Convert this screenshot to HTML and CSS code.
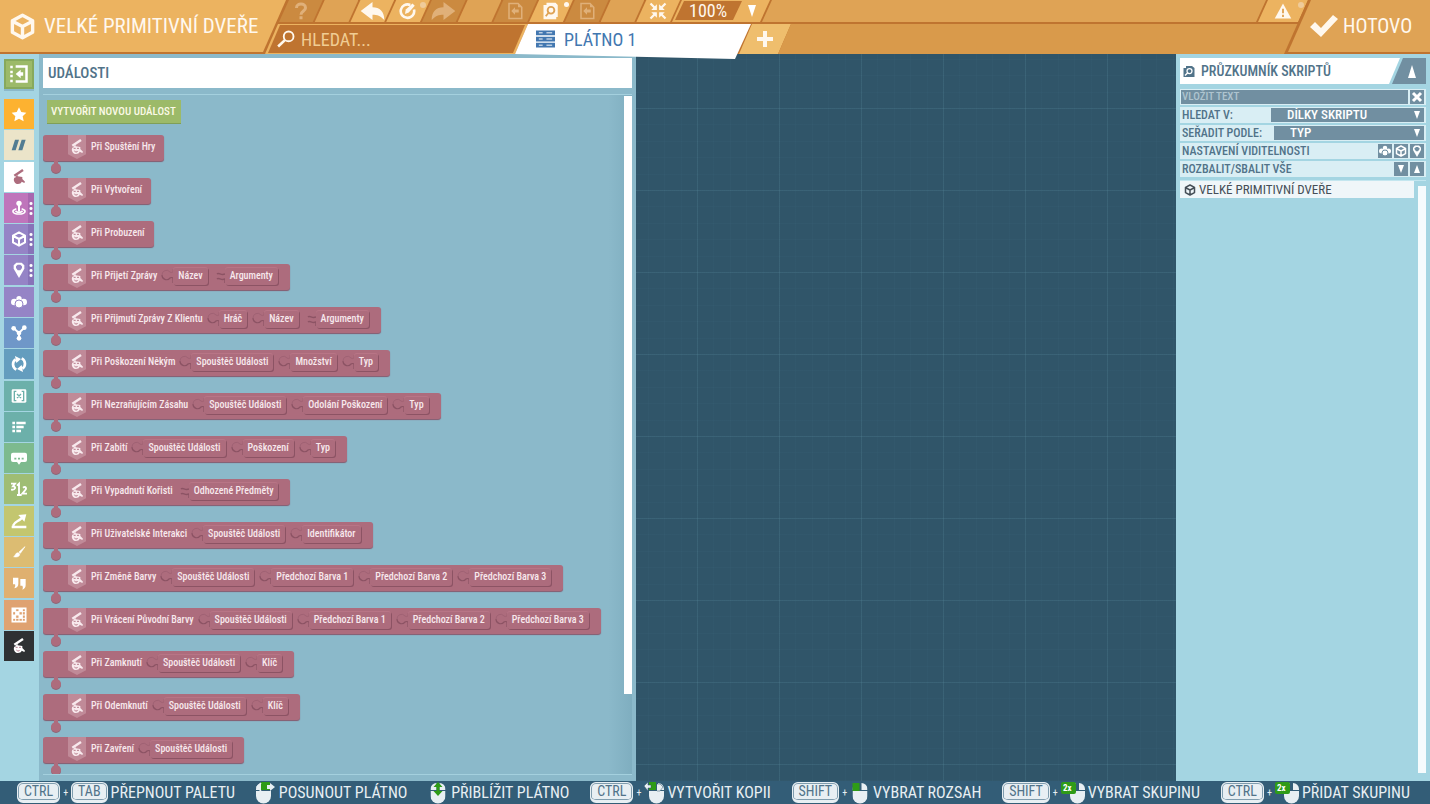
FILE: index.html
```html
<!DOCTYPE html>
<html lang="cs">
<head>
    <meta charset="UTF-8">
    <meta name="viewport" content="width=device-width, initial-scale=1.0">
    <title>Velké primitivní dveře</title>
    <link rel="stylesheet" href="styles.css">
</head>
<body>
    <!-- Shared icon shapes -->
    <svg class="sprite" width="0" height="0" aria-hidden="true">
        <symbol id="i-cube" viewBox="0 0 24 24"><path d="M12 2 21 6.8V17.2L12 22 3 17.2V6.8ZM3.5 7.5 12 12 20.500 7.500M12 12V21.500" fill="none" stroke="currentColor" stroke-width="3" stroke-linejoin="round"/></symbol>
        <symbol id="i-event" viewBox="0 0 18 24"><path d="M1 8.500 14 0l2 3L3 11.500Z"/><path d="M4 11l3-2 0 2 7 1v3l4 4-1 2-4-2c-1 4-9 5-11 0-1-2-1-4 0-6l3-1Z"/><path d="M4 14h3M9 14h3M5 18c2 2 4 2 5 0" stroke="#ad6c7d" stroke-width="1.300" fill="none"/></symbol>
        <symbol id="i-plug" viewBox="0 0 12 14"><path d="M1 6a4.500 4.500 0 0 0 8 3q1-1 3 0V14" fill="none" stroke="#8c5364" stroke-width="1.200"/><path d="M1 6a4.500 4.500 0 0 1 8-3q1 1 3 0V0" fill="none" stroke="#a06274"/></symbol>
        <symbol id="i-plug2" viewBox="0 0 12 14"><path d="M4 5c2-2 4 2 8 0M4 10c2-2 4 2 8 0V14" fill="none" stroke="#8c5364" stroke-width="1.400"/></symbol>
        <symbol id="i-doc" viewBox="0 0 24 24"><path d="M4 2h12l5 5v15H4Z" fill="none" stroke="currentColor" stroke-width="2"/><path d="M7 12l5-5v3h5v4h-5v3ZM16 2v5h5"/></symbol>
        <symbol id="i-mouse" viewBox="0 0 15 22"><path d="M0 9h15v5a7.500 7.500 0 0 1-15 0Z"/><path d="M0 8V7a6 6 0 0 1 6-6v7ZM9 8V1a6 6 0 0 1 6 6v1Z"/></symbol>
    </svg>

    <header class="topbar">
        <div class="object-name">
            <svg class="icon-cube"><use href="#i-cube"/></svg>
            <h1>VELKÉ PRIMITIVNÍ DVEŘE</h1>
        </div>
        <div class="middle">
            <div class="toolbar">
                <div class="tools">
                    <button class="tool off" aria-label="Nápověda"><svg viewBox="0 0 24 24"><path d="M6 8C6 1 18 1 18 8c0 4-6 4-6 9M12 19v4" fill="none" stroke="currentColor" stroke-width="4"/></svg></button>
                    <span class="tool empty"></span>
                    <button class="tool on" aria-label="Zpět"><svg class="wide" viewBox="0 0 26 22"><path d="M0 11 13 1V7C21 7 26 12 26 21 22 16 18 15 13 15v6Z"/></svg></button>
                    <button class="tool on dot faded" aria-label="Zaměřit"><svg viewBox="0 0 24 24"><path d="M15 4A9 9 0 1 0 20 10" fill="none" stroke="currentColor" stroke-width="3.500"/><path d="M8 16 9 10 18 2l3 3-8 9Z"/></svg></button>
                    <button class="tool off" aria-label="Znovu"><svg class="wide" viewBox="0 0 26 22"><path d="M26 11 13 1V7C5 7 0 12 0 21 4 16 8 15 13 15v6Z"/></svg></button>
                    <span class="tool empty"></span>
                    <button class="tool off" aria-label="Vložit"><svg><use href="#i-doc"/></svg></button>
                    <button class="tool on dot" aria-label="Průzkumník"><svg viewBox="0 0 24 24"><path d="M6 1h12l3 3v16h-2v3H2V4h4Z"/><circle cx="12" cy="11" r="4.500" fill="none" stroke="#dfa355" stroke-width="2.500"/><path d="M9 14l-4 5" stroke="#dfa355" stroke-width="2.500"/></svg></button>
                    <button class="tool off" aria-label="Vyjmout"><svg><use href="#i-doc"/></svg></button>
                    <span class="tool empty"></span>
                    <button class="tool on" aria-label="Vycentrovat"><svg viewBox="0 0 24 24"><path d="M2 2l7 7M22 2l-7 7M2 22l7-7M22 22l-7-7" stroke="currentColor" stroke-width="3"/><path d="M10.500 3v7.500H3ZM13.500 3v7.500H21ZM10.500 21v-7.500H3ZM13.500 21v-7.500H21Z"/></svg></button>
                </div>
                <label class="zoom">
                    <select aria-label="Přiblížení"><option>100%</option></select>
                    <span class="arrow-down"></span>
                </label>
                <span class="tool rest"></span>
                <button class="tool on alert dot faded" aria-label="Varování"><svg viewBox="0 0 24 24"><path d="M12 2 23 22H1Z"/><path d="M12 9v6M12 17v3" stroke="#dfa355" stroke-width="2.500"/></svg></button>
            </div>
            <div class="tabs">
                <label class="search">
                    <svg viewBox="0 0 24 24"><circle cx="15.500" cy="8.500" r="6.500" fill="none" stroke="currentColor" stroke-width="2.500"/><path d="M10.500 13.500 1.500 22" stroke="currentColor" stroke-width="3.500"/></svg>
                    <input type="text" placeholder="HLEDAT..." aria-label="Hledat">
                </label>
                <button class="tab">
                    <svg viewBox="0 0 20 18"><path d="M0 0h20v5H0ZM0 6.500h20v5H0ZM0 13h20v5H0Z"/><path d="M3 2.500h4M11 2.500h6M3 9h4M11 9h6M3 15.500h4M11 15.500h6" stroke="#fff"/></svg>
                    PLÁTNO 1
                </button>
                <button class="add-tab" aria-label="Přidat plátno"><svg viewBox="0 0 16 16"><path d="M8 0v16M0 8h16" stroke="currentColor" stroke-width="4"/></svg></button>
                <span class="tabs-rest"></span>
            </div>
        </div>
        <button class="done">
            <svg viewBox="0 0 28 22"><path d="M0 12 5 7l6 6L23 0l5 4L11 22Z"/></svg>
            HOTOVO
        </button>
    </header>

    <main class="workspace">
        <nav class="palette">
            <button class="cat toggle" aria-label="Skrýt paletu"><svg viewBox="0 0 24 24"><path d="M8 3h13v18H8M3 2v3M3 8v3M3 13v3M3 19v3" fill="none" stroke="currentColor" stroke-width="3"/><path d="M8 12l6-5v3h3v4h-3v3Z"/></svg></button>
            <div class="cats">
                <button class="cat star" aria-label="Oblíbené"><svg viewBox="0 0 24 24"><path d="M12 2l3.400 7 7.600 1-5.500 5.300L19 23l-7-3.700L5 23l1.500-7.700L1 10l7.600-1Z"/></svg></button>
                <button class="cat comment" aria-label="Komentáře"><svg viewBox="0 0 24 24"><path d="M6 4h6L7 20H1ZM16 4h6l-5 16h-6Z"/></svg></button>
                <button class="cat events" aria-label="Události"><svg><use href="#i-event"/></svg></button>
                <button class="cat player more" aria-label="Ovládání"><svg viewBox="0 0 24 24"><circle cx="12" cy="5" r="4"/><path d="M12 5v12" stroke="currentColor" stroke-width="3"/><path d="M8 13c-9 3-5 8 4 8s13-5 4-8M7 16c1 3 9 3 10 0" fill="none" stroke="currentColor" stroke-width="2.500"/></svg></button>
                <button class="cat object more" aria-label="Objekty"><svg><use href="#i-cube"/></svg></button>
                <button class="cat object more" aria-label="Místa"><svg viewBox="0 0 24 24"><path d="M8 1h8l4 4v5l-8 14-8-14V5Z"/><path d="M10 4h4l2.500 2.500V9L14 12.500h-4L7.500 9V6.500Z" fill="#9584c6"/></svg></button>
                <button class="cat object" aria-label="Skupiny"><svg viewBox="0 0 24 24"><circle cx="12" cy="7" r="4"/><circle cx="5" cy="12" r="5"/><circle cx="19" cy="12" r="5"/><circle cx="12" cy="15" r="6" stroke="#9584c6" stroke-width="1.500"/></svg></button>
                <button class="cat logic" aria-label="Logika"><svg viewBox="0 0 24 24"><path d="M4 5l8 7 8-8M12 12v8" stroke="currentColor" stroke-width="3" fill="none"/><circle cx="4" cy="5" r="3.500"/><circle cx="20" cy="4" r="3.500"/><circle cx="12" cy="12" r="3.500"/><circle cx="12" cy="20" r="3.500"/></svg></button>
                <button class="cat loop" aria-label="Cykly"><svg viewBox="0 0 24 24"><path d="M8 20.500A9 9 0 0 1 7 5M16 3.500A9 9 0 0 1 17 19" fill="none" stroke="currentColor" stroke-width="4"/><path d="M6 0l9 4.500-7 6ZM18 24l-9-4.500 7-6Z"/></svg></button>
                <button class="cat vars" aria-label="Proměnné"><svg viewBox="0 0 24 24"><rect x="1" y="2" width="22" height="20" rx="2"/><path d="M8 5H5v14h3M16 5h3v14h-3M9 9l6 6M15 9l-6 6" fill="none" stroke="#6cb0aa" stroke-width="2"/></svg></button>
                <button class="cat vars" aria-label="Seznamy"><svg viewBox="0 0 24 24"><path d="M2 6h4M2 12h4M2 18h4M8 6h14M8 12h11M8 18h7" stroke="currentColor" stroke-width="4"/></svg></button>
                <button class="cat chat" aria-label="Zprávy"><svg viewBox="0 0 24 24"><path d="M3 4h18q3 0 3 3v8q0 3-3 3h-6l-3 4-3-4H3q-3 0-3-3V7q0-3 3-3Z"/><path d="M5 13h3M10.500 13h3M16 13h3" stroke="#7dba8e" stroke-width="2.500"/></svg></button>
                <button class="cat numbers" aria-label="Čísla"><svg viewBox="0 0 24 24"><path d="M0 4h6L3 8c5 0 4 6-3 5M9 7l3-3v17M9 21h7M18 10c4-3 6 1 3 4l-4 5h7" fill="none" stroke="currentColor" stroke-width="2.800"/></svg></button>
                <button class="cat vector" aria-label="Vektory"><svg viewBox="0 0 24 24"><path d="M1 21h22M3 19c3-7 7-5 14-12" fill="none" stroke="currentColor" stroke-width="3.500"/><path d="M11 3l12-1-3 11Z"/></svg></button>
                <button class="cat brush" aria-label="Barvy"><svg viewBox="0 0 24 24"><path d="M21 4 12 12l2 2ZM11 13c-5 0-4 5-7 6 5 1 9 0 9-4Z" stroke="currentColor"/></svg></button>
                <button class="cat strings" aria-label="Texty"><svg viewBox="0 0 24 24"><path d="M3 4h8v9c0 4-2 6-6 7 1-2 2-4 1-6H3ZM14 6h8v9c0 4-2 6-5 7 1-3 1-4 0-6h-3Z"/></svg></button>
                <button class="cat assets" aria-label="Materiály"><svg viewBox="0 0 24 24"><path d="M2 2h20v20H2Z" fill="none" stroke="currentColor" stroke-width="2.500"/><path d="M2 7h20M2 12h20M2 17h20M7 2v20M12 2v20M17 2v20" stroke="currentColor" stroke-width="1.500"/><path d="M2 2h5v5H2ZM12 2h5v5h-5ZM7 7h5v5H7ZM2 12h5v5H2ZM12 12h5v5h-5Z"/></svg></button>
                <button class="cat custom" aria-label="Vlastní události"><svg><use href="#i-event"/></svg></button>
            </div>
        </nav>

        <section class="panel">
            <h2>UDÁLOSTI</h2>
            <div class="list">
                <button class="new-event">VYTVOŘIT NOVOU UDÁLOST</button>
                <ul class="blocks">
                    <li class="block"><svg class="badge"><use href="#i-event"/></svg><span>Při Spuštění Hry</span></li>
                    <li class="block"><svg class="badge"><use href="#i-event"/></svg><span>Při Vytvoření</span></li>
                    <li class="block"><svg class="badge"><use href="#i-event"/></svg><span>Při Probuzení</span></li>
                    <li class="block args"><svg class="badge"><use href="#i-event"/></svg><span>Při Přijetí Zprávy</span><svg class="plug"><use href="#i-plug"/></svg><span class="slot">Název</span><svg class="plug double"><use href="#i-plug2"/></svg><span class="slot">Argumenty</span></li>
                    <li class="block args"><svg class="badge"><use href="#i-event"/></svg><span>Při Přijmutí Zprávy Z Klientu</span><svg class="plug"><use href="#i-plug"/></svg><span class="slot">Hráč</span><svg class="plug"><use href="#i-plug"/></svg><span class="slot">Název</span><svg class="plug double"><use href="#i-plug2"/></svg><span class="slot">Argumenty</span></li>
                    <li class="block args"><svg class="badge"><use href="#i-event"/></svg><span>Při Poškození Někým</span><svg class="plug"><use href="#i-plug"/></svg><span class="slot">Spouštěč Události</span><svg class="plug"><use href="#i-plug"/></svg><span class="slot">Množství</span><svg class="plug"><use href="#i-plug"/></svg><span class="slot">Typ</span></li>
                    <li class="block args"><svg class="badge"><use href="#i-event"/></svg><span>Při Nezraňujícím Zásahu</span><svg class="plug"><use href="#i-plug"/></svg><span class="slot">Spouštěč Události</span><svg class="plug"><use href="#i-plug"/></svg><span class="slot">Odolání Poškození</span><svg class="plug"><use href="#i-plug"/></svg><span class="slot">Typ</span></li>
                    <li class="block args"><svg class="badge"><use href="#i-event"/></svg><span>Při Zabití</span><svg class="plug"><use href="#i-plug"/></svg><span class="slot">Spouštěč Události</span><svg class="plug"><use href="#i-plug"/></svg><span class="slot">Poškození</span><svg class="plug"><use href="#i-plug"/></svg><span class="slot">Typ</span></li>
                    <li class="block args"><svg class="badge"><use href="#i-event"/></svg><span>Při Vypadnutí Kořisti</span><svg class="plug"><use href="#i-plug2"/></svg><span class="slot">Odhozené Předměty</span></li>
                    <li class="block args"><svg class="badge"><use href="#i-event"/></svg><span>Při Uživatelské Interakci</span><svg class="plug"><use href="#i-plug"/></svg><span class="slot">Spouštěč Události</span><svg class="plug"><use href="#i-plug"/></svg><span class="slot">Identifikátor</span></li>
                    <li class="block args"><svg class="badge"><use href="#i-event"/></svg><span>Při Změně Barvy</span><svg class="plug"><use href="#i-plug"/></svg><span class="slot">Spouštěč Události</span><svg class="plug"><use href="#i-plug"/></svg><span class="slot">Předchozí Barva 1</span><svg class="plug"><use href="#i-plug"/></svg><span class="slot">Předchozí Barva 2</span><svg class="plug"><use href="#i-plug"/></svg><span class="slot">Předchozí Barva 3</span></li>
                    <li class="block args"><svg class="badge"><use href="#i-event"/></svg><span>Při Vrácení Původní Barvy</span><svg class="plug"><use href="#i-plug"/></svg><span class="slot">Spouštěč Události</span><svg class="plug"><use href="#i-plug"/></svg><span class="slot">Předchozí Barva 1</span><svg class="plug"><use href="#i-plug"/></svg><span class="slot">Předchozí Barva 2</span><svg class="plug"><use href="#i-plug"/></svg><span class="slot">Předchozí Barva 3</span></li>
                    <li class="block args"><svg class="badge"><use href="#i-event"/></svg><span>Při Zamknutí</span><svg class="plug"><use href="#i-plug"/></svg><span class="slot">Spouštěč Události</span><svg class="plug"><use href="#i-plug"/></svg><span class="slot">Klíč</span></li>
                    <li class="block args"><svg class="badge"><use href="#i-event"/></svg><span>Při Odemknutí</span><svg class="plug"><use href="#i-plug"/></svg><span class="slot">Spouštěč Události</span><svg class="plug"><use href="#i-plug"/></svg><span class="slot">Klíč</span></li>
                    <li class="block args"><svg class="badge"><use href="#i-event"/></svg><span>Při Zavření</span><svg class="plug"><use href="#i-plug"/></svg><span class="slot">Spouštěč Události</span></li>
                </ul>
                <div class="scrollbar"></div>
            </div>
        </section>

        <section class="canvas"></section>

        <aside class="explorer">
            <div class="explorer-head">
                <h2><svg viewBox="0 0 24 24"><path d="M6 1h12l5 4v18H1V5h5Z"/><circle cx="13" cy="11" r="5" fill="none" stroke="#fff" stroke-width="2.500"/><path d="M10 14l-6 6" stroke="#fff" stroke-width="3"/></svg>PRŮZKUMNÍK SKRIPTŮ</h2>
                <button class="collapse" aria-label="Sbalit"><span class="arrow-up"></span></button>
            </div>
            <div class="row filter">
                <input type="text" placeholder="VLOŽIT TEXT" aria-label="Vložit text">
                <button class="mini" aria-label="Smazat"><svg viewBox="0 0 12 12"><path d="M2 2l8 8M10 2l-8 8" stroke="currentColor" stroke-width="3"/></svg></button>
            </div>
            <div class="row">
                <label for="searchIn">HLEDAT V:</label>
                <span class="pick"><select id="searchIn"><option>DÍLKY SKRIPTU</option></select><span class="arrow-down"></span></span>
            </div>
            <div class="row">
                <label for="sortBy">SEŘADIT PODLE:</label>
                <span class="pick sort"><select id="sortBy"><option>TYP</option></select><span class="arrow-down"></span></span>
            </div>
            <div class="row">
                <span class="row-text">NASTAVENÍ VIDITELNOSTI</span>
                <button class="mini" aria-label="Skupiny"><svg viewBox="0 0 24 24"><circle cx="12" cy="6" r="4.500"/><circle cx="5" cy="12" r="5"/><circle cx="19" cy="12" r="5"/><circle cx="12" cy="16" r="6" stroke="#718fa1" stroke-width="2"/></svg></button>
                <button class="mini" aria-label="Objekty"><svg><use href="#i-cube"/></svg></button>
                <button class="mini" aria-label="Místa"><svg viewBox="0 0 24 24"><path d="M8 1h8l4 4v5l-8 14-8-14V5Z"/><path d="M10 4h4l2.500 2.500V9L14 12.500h-4L7.500 9V6.500Z" fill="#718fa1"/></svg></button>
            </div>
            <div class="row">
                <span class="row-text">ROZBALIT/SBALIT VŠE</span>
                <button class="mini" aria-label="Rozbalit"><span class="arrow-down"></span></button>
                <button class="mini" aria-label="Sbalit vše"><span class="arrow-up"></span></button>
            </div>
            <div class="tree">
                <div class="tree-item"><svg><use href="#i-cube"/></svg>VELKÉ PRIMITIVNÍ DVEŘE</div>
                <div class="scrollbar"></div>
            </div>
        </aside>
    </main>

    <footer class="hints">
        <div class="hint"><kbd>CTRL</kbd><i>+</i><kbd>TAB</kbd><span>PŘEPNOUT PALETU</span></div>
        <div class="hint"><svg class="mouse" viewBox="0 0 20 22"><use href="#i-mouse" width="15" height="22"/><path d="M5 0h9v8H5Z" fill="#2f9b17"/><path d="M5 1 1 5l4 4" fill="none" stroke="#e8eff3" stroke-width="1.500"/><path d="M14 1v2h-3v4h3v2l5-4Z"/></svg><span>POSUNOUT PLÁTNO</span></div>
        <div class="hint"><svg class="mouse" viewBox="0 0 15 22"><use href="#i-mouse" width="15" height="22"/><path d="M7.500 0 12 5H9v4h3l-4.500 5L3 9h3V5H3Z" fill="#2f9b17"/></svg><span>PŘIBLÍŽIT PLÁTNO</span></div>
        <div class="hint"><kbd>CTRL</kbd><i>+</i><svg class="mouse" viewBox="0 0 20 22"><use href="#i-mouse" x="5" width="15" height="22"/><path d="M5 0h7v8H5Z" fill="#2f9b17"/><path d="M0 4l4-4v3h3v3H4v3ZM13 2h3l3 3-3 4h-3" stroke="#305569" stroke-width=".5" fill="#e8eff3"/></svg><span>VYTVOŘIT KOPII</span></div>
        <div class="hint"><kbd>SHIFT</kbd><i>+</i><svg class="mouse" viewBox="0 0 15 22"><use href="#i-mouse" width="15" height="22"/><path d="M0 1h7v8H0Z" fill="#2f9b17"/></svg><span>VYBRAT ROZSAH</span></div>
        <div class="hint"><kbd>SHIFT</kbd><i>+</i><svg class="mouse double" viewBox="0 0 24 22"><use href="#i-mouse" x="9" width="15" height="22"/><rect width="15" height="12" rx="2" fill="#2f9b17"/><text x="2" y="9">2x</text></svg><span>VYBRAT SKUPINU</span></div>
        <div class="hint"><kbd>CTRL</kbd><i>+</i><svg class="mouse double" viewBox="0 0 24 22"><use href="#i-mouse" x="9" width="15" height="22"/><rect width="15" height="12" rx="2" fill="#2f9b17"/><text x="2" y="9">2x</text></svg><span>PŘIDAT SKUPINU</span></div>
    </footer>
</body>
</html>
```
FILE: styles.css
```css
* {
    box-sizing: border-box;
}

body, html {
    margin: 0;
    height: 100%;
}

body {
    display: flex;
    flex-direction: column;
    overflow: hidden;
    font-family: "Roboto Condensed", "Roboto", sans-serif;
    font-size: 14px;
    background: #305569;
}

h1, h2, ul {
    margin: 0;
    padding: 0;
    font-weight: normal;
}

button, select, input {
    margin: 0;
    padding: 0;
    border: 0;
    border-radius: 0;
    font: inherit;
    color: inherit;
    background: none;
}

button, select {
    cursor: pointer;
}

button, label {
    white-space: nowrap;
}

select {
    appearance: none;
}

input:focus {
    outline: none;
}

svg {
    display: block;
    flex: none;
    fill: currentColor;
}

.sprite {
    position: absolute;
}

.arrow-down, .arrow-up {
    border: 4px solid transparent;
}

.arrow-down {
    border-top: 8px solid #fff;
    border-bottom: 0;
}

.arrow-up {
    border-bottom: 8px solid #fff;
    border-top: 0;
}

/* Top bar */
.topbar {
    position: relative;
    z-index: 2;
    display: flex;
    flex: none;
    height: 54px;
    background: #bf7430;
    color: #fff8ee;
}

.object-name {
    display: flex;
    flex: none;
    align-items: center;
    gap: 8px;
    width: 286px;
    height: 52px;
    padding-left: 9px;
    background: #ecb360;
    clip-path: polygon(0 0, 100% 0, calc(100% - 23px) 100%, 0 100%);
}

.object-name h1 {
    font-size: 21px;
    white-space: nowrap;
}

.icon-cube {
    width: 27px;
    height: 27px;
}

.middle {
    flex: 1;
    min-width: 0;
    margin: 0 -24px 0 -21px;
}

.toolbar {
    display: flex;
    height: 22px;
    padding-left: 14px;
}

.tools {
    display: flex;
    flex: 0 0 393px;
}

.tool {
    position: relative;
    display: flex;
    flex: 1;
    align-items: center;
    justify-content: center;
    margin-right: -8px;
    clip-path: polygon(10px 0, 100% 0, calc(100% - 10px) 100%, 0 100%);
}

.tool svg {
    width: 18px;
    height: 18px;
}

.tool svg.wide {
    width: 25px;
    height: 20px;
}

.tool.on {
    background: #ecb360;
}

.tool.off {
    background: #cb8a40;
    color: #e0b079;
}

.tool.empty, .tool.rest {
    background: #dfa355;
}

.tool.alert {
    flex: 0 0 50px;
    margin-right: 0;
}

/* Status dot in the corner of a tool */
.dot::after {
    content: '';
    position: absolute;
    top: 2px;
    right: 4px;
    width: 5px;
    height: 5px;
    background: #fff8ee;
    border-radius: 50%;
}

.dot.faded::after {
    width: 6px;
    height: 6px;
    background: #efcb9a;
}

.zoom {
    display: flex;
    flex: 0 0 98px;
    align-items: center;
    gap: 6px;
    margin-right: -8px;
    padding: 1px 0 2px 3px;
    background: #ecb360;
    clip-path: polygon(10px 0, 100% 0, calc(100% - 10px) 100%, 0 100%);
}

.zoom select {
    width: 67px;
    height: 19px;
    padding-left: 14px;
    font-size: 18px;
    line-height: 19px;
    background: #bf7430;
    clip-path: polygon(9px 0, 100% 0, calc(100% - 9px) 100%, 0 100%);
}

.zoom .arrow-down {
    border-top-width: 12px;
}

.tabs {
    display: flex;
    height: 30px;
    margin-top: 2px;
}

.search {
    position: relative;
    z-index: 0;
    display: flex;
    flex: 0 0 263px;
    align-items: center;
    gap: 6px;
    padding-left: 12px;
    background: #ecb360;
    clip-path: polygon(13px 0, 100% 0, calc(100% - 13px) 100%, 0 100%);
}

.search::before {
    content: '';
    position: absolute;
    z-index: -1;
    inset: 1px 3px;
    background: #bf7430;
    clip-path: polygon(12px 0, 100% 0, calc(100% - 12px) 100%, 0 100%);
}

.search svg {
    width: 18px;
    height: 18px;
}

.search input {
    width: 200px;
    font-size: 18px;
}

.search input::placeholder {
    color: #f0cd94;
    opacity: 1;
}

.tab {
    display: flex;
    flex: 0 0 236px;
    align-items: center;
    gap: 9px;
    height: 35px;
    margin-left: -13px;
    padding: 0 0 5px 21px;
    font-size: 18px;
    color: #4277b0;
    background: #fff;
    clip-path: polygon(13px 0, 100% 0, calc(100% - 16px) 100%, 0 30px);
}

.tab svg {
    width: 19px;
    height: 18px;
}

.add-tab {
    display: flex;
    flex: 0 0 52px;
    align-items: center;
    justify-content: center;
    margin-left: -12px;
    background: #efbe6d;
    clip-path: polygon(13px 0, 100% 0, calc(100% - 13px) 100%, 0 100%);
}

.add-tab svg {
    width: 16px;
    height: 16px;
}

.tabs-rest {
    flex: 1;
    margin-left: -13px;
    background: #d99a4b;
    clip-path: polygon(13px 0, 100% 0, 100% 100%, 0 100%);
}

.done {
    position: relative;
    z-index: 0;
    display: flex;
    flex: 0 0 146px;
    align-items: center;
    gap: 5px;
    min-width: 0;
    padding: 0 0 2px 26px;
    font-size: 20px;
    background: #bf7430;
    clip-path: polygon(24px 0, 100% 0, 100% 100%, 0 100%);
}

.done::before {
    content: '';
    position: absolute;
    z-index: -1;
    inset: 0 0 2px 4px;
    background: #dfa355;
    clip-path: polygon(23px 0, 100% 0, 100% 100%, 0 100%);
}

.done svg {
    width: 28px;
    height: 22px;
}

/* Work area */
.workspace {
    display: flex;
    flex: 1;
    min-height: 0;
}

.palette {
    flex: 0 0 39px;
    padding: 5px 4px;
    background: #a4d5e2;
}

.cats {
    display: flex;
    flex-direction: column;
    justify-content: space-between;
    height: 562px;
    margin-top: 10px;
}

.cat {
    position: relative;
    display: flex;
    align-items: center;
    justify-content: center;
    width: 30px;
    height: 30px;
    color: #fff;
}

.cat svg {
    width: 16px;
    height: 16px;
}

.cat.toggle {
    background: #9cba69;
    border: 2px solid #87a95c;
    box-shadow: 0 2px 0 #8bb9ca;
}

.cat.toggle svg {
    width: 20px;
    height: 20px;
}

.cat.star { background: #fdb230; }
.cat.comment { background: #ebe4c9; color: #517c92; }
.cat.events { background: #fff; color: #ad6c7d; }
.cat.player { background: #bf75bb; }
.cat.object { background: #9584c6; }
.cat.logic { background: #6f97c8; }
.cat.loop { background: #649dbe; }
.cat.vars { background: #6cb0aa; }
.cat.chat { background: #7dba8e; }
.cat.numbers { background: #9fbd74; }
.cat.vector { background: #c3c66f; }
.cat.brush { background: #dcbc72; }
.cat.strings { background: #dfb070; }
.cat.assets { background: #dfa271; }
.cat.custom { background: #2f3133; }

/* Dotted strip on categories with a submenu */
.cat.more::after {
    content: '';
    position: absolute;
    right: 0;
    top: 0;
    width: 6px;
    height: 30px;
    background: radial-gradient(circle, #fff 1px, transparent 2px) 0 8px / 6px 5px no-repeat,
        radial-gradient(circle, #fff 1px, transparent 2px) 0 13px / 6px 5px no-repeat,
        radial-gradient(circle, #fff 1px, transparent 2px) 0 18px / 6px 5px no-repeat,
        rgba(80, 50, 130, 0.2);
}

.panel {
    display: flex;
    flex-direction: column;
    flex: 0 0 597px;
    min-width: 0;
    padding: 4px 4px 6px;
    background: #8bb9ca;
}

.panel h2 {
    flex: none;
    padding-left: 5px;
    font-size: 15px;
    font-weight: 500;
    line-height: 30px;
    color: #517389;
    background: #fff;
}

.list {
    position: relative;
    flex: 1;
    min-height: 0;
    margin-top: 6px;
    padding-top: 5px;
    border-top: 1px solid #a4d0de;
    border-bottom: 1px solid #a4d0de;
    overflow: hidden;
    background: linear-gradient(90deg, rgba(80, 130, 150, 0), rgba(80, 130, 150, 0) 96%, rgba(80, 130, 150, 0.2));
}

.new-event {
    display: block;
    margin-left: 4px;
    padding: 0 5px 0 4px;
    font-size: 11px;
    font-weight: 500;
    line-height: 23px;
    color: #fbf9e6;
    background: #9cba69;
    border-bottom: 1px solid #7f9f58;
}

.blocks {
    display: flex;
    flex-direction: column;
    align-items: flex-start;
    gap: 17px;
    margin-top: 11px;
    list-style: none;
}

.block {
    position: relative;
    display: flex;
    align-items: center;
    height: 26px;
    padding: 0 9px 2px 25px;
    font-size: 10px;
    font-weight: 500;
    line-height: 18px;
    color: #f8e9ed;
    white-space: nowrap;
    background: #ad6c7d;
    border-radius: 3px;
    box-shadow: 0 1px 1px #85596d;
}

.block.args {
    padding-right: 12px;
}

/* Knob that hooks the next block */
.block::before {
    content: '';
    position: absolute;
    left: 11px;
    top: 25px;
    width: 4px;
    height: 6px;
    background: #ad6c7d;
}

.block::after {
    content: '';
    position: absolute;
    left: 8px;
    top: 28px;
    width: 10px;
    height: 10px;
    background: #ad6c7d;
    border-radius: 50%;
    box-shadow: 0 1px 0 #8e6577;
}

.badge {
    width: 18px;
    height: 24px;
    margin-right: 5px;
    padding: 4px 2px;
    background: #c08a98;
    clip-path: polygon(0 0, 100% 0, 100% 80%, 50% 100%, 0 80%);
}

.plug {
    width: 12px;
    height: 14px;
    margin-left: 4px;
}

.slot + .plug {
    margin-left: 5px;
}

.slot {
    padding: 0 5px;
    border-radius: 3px;
    box-shadow: 1px 1px 0 #8c5364, inset 0 1px 0 #b87586;
}

.list .scrollbar {
    position: absolute;
    right: 0;
    top: 1px;
    width: 8px;
    height: 88%;
    background: #fff;
}

.canvas {
    flex: 1;
    background-color: #305569;
    background-image:
        linear-gradient(90deg, rgba(120, 180, 190, 0.12) 1px, transparent 1px),
        linear-gradient(rgba(120, 180, 190, 0.12) 1px, transparent 1px),
        repeating-linear-gradient(90deg, rgba(120, 180, 190, 0.03) 0 1px, transparent 1px 20%),
        repeating-linear-gradient(rgba(120, 180, 190, 0.03) 0 1px, transparent 1px 20%);
    background-size: 82px 82px;
    background-position: 61px 54px;
}

/* Script explorer */
.explorer {
    display: flex;
    flex-direction: column;
    flex: 0 0 254px;
    padding: 4px 4px 8px;
    font-weight: 500;
    color: #517389;
    background: #a4d5e2;
}

.explorer-head {
    display: flex;
    flex: none;
    height: 26px;
    margin-bottom: 5px;
}

.explorer-head h2 {
    display: flex;
    flex: 1;
    align-items: center;
    gap: 6px;
    margin-right: -8px;
    padding-left: 3px;
    font-size: 14px;
    font-weight: 500;
    background: #fff;
    clip-path: polygon(0 0, 100% 0, calc(100% - 11px) 100%, 0 100%);
}

.explorer-head svg {
    width: 12px;
    height: 13px;
}

.collapse {
    display: flex;
    flex: 0 0 34px;
    align-items: center;
    justify-content: center;
    padding-left: 6px;
    background: #718fa1;
    clip-path: polygon(11px 0, 100% 0, 100% 100%, 0 100%);
}

.collapse .arrow-up {
    border-bottom-width: 13px;
}

.row {
    display: flex;
    flex: none;
    align-items: center;
    gap: 2px;
    height: 16px;
    margin-bottom: 2px;
    padding: 0 2px;
    font-size: 12px;
    line-height: 16px;
    background: #d9eef4;
}

.row-text {
    flex: 1;
}

.filter {
    padding-left: 1px;
}

.filter input {
    flex: 1;
    min-width: 0;
    height: 14px;
    padding-left: 1px;
    font-size: 11px;
    line-height: 14px;
    background: #718fa1;
}

.filter input::placeholder {
    color: #aec4cf;
    opacity: 1;
}

.row .mini {
    display: flex;
    flex: 0 0 14px;
    align-items: center;
    justify-content: center;
    height: 14px;
    color: #fff;
    background: #718fa1;
}

.mini svg {
    width: 12px;
    height: 12px;
}

.mini .arrow-up, .mini .arrow-down, .pick .arrow-down {
    border-left-width: 3px;
    border-right-width: 3px;
}

.pick {
    display: flex;
    flex: 0 0 153px;
    align-items: center;
    margin-left: auto;
    padding-right: 4px;
    color: #fff;
    background: #718fa1;
}

.pick.sort {
    flex-basis: 150px;
}

.pick select {
    flex: 1;
    height: 14px;
    padding-left: 16px;
    font-size: 13px;
    line-height: 14px;
}

.tree {
    display: flex;
    flex: 1;
    align-items: flex-start;
    gap: 4px;
    margin-top: 1px;
    border-top: 1px solid #c3e6ef;
}

.tree-item {
    display: flex;
    flex: 1;
    align-items: center;
    gap: 3px;
    height: 17px;
    padding-left: 4px;
    font-size: 13px;
    font-weight: normal;
    color: #454e57;
    background: #eff6f9;
}

.tree-item svg {
    width: 12px;
    height: 12px;
}

.tree .scrollbar {
    align-self: stretch;
    flex: 0 0 8px;
    margin-top: 5px;
    background: #f5fbfd;
}

/* Key hints */
.hints {
    display: flex;
    flex: none;
    justify-content: space-between;
    height: 23px;
    padding: 0 20px 0 17px;
    color: #e8eff3;
    background: #335d77;
}

.hint {
    display: flex;
    align-items: center;
    gap: 3px;
    font-size: 16px;
    white-space: nowrap;
}

.hint i {
    font-size: 10px;
    font-style: normal;
}

.hint kbd {
    padding: 0 6px;
    font-family: inherit;
    font-size: 14px;
    line-height: 17px;
    color: #517389;
    background: #e8eff3;
    border: 1px solid #e8eff3;
    border-bottom-width: 3px;
    border-radius: 6px;
    box-shadow: inset 0 0 0 1px #7f9dae;
}

.mouse {
    width: 20px;
    height: 22px;
}

.mouse.double {
    width: 24px;
}

.mouse text {
    font-size: 9px;
    font-weight: bold;
    fill: #fff;
}
```
